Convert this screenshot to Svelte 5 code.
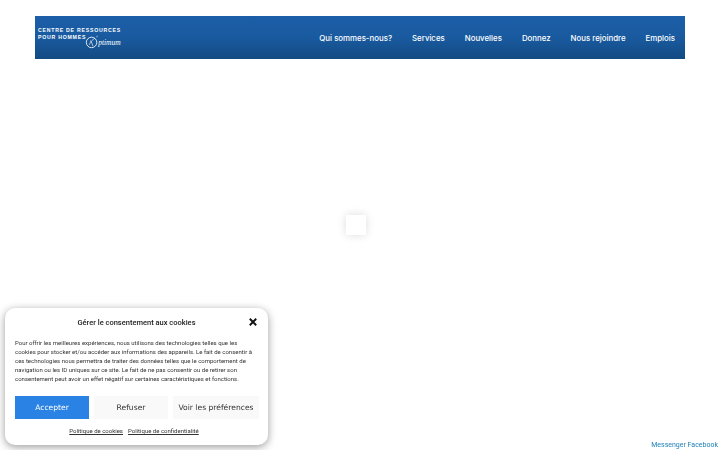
<script lang="ts">
  const navItems = ['Qui sommes-nous?', 'Services', 'Nouvelles', 'Donnez', 'Nous rejoindre', 'Emplois'];
  const consentLines = [
    'Pour offrir les meilleures expériences, nous utilisons des technologies telles que les',
    'cookies pour stocker et/ou accéder aux informations des appareils. Le fait de consentir à',
    'ces technologies nous permettra de traiter des données telles que le comportement de',
    'navigation ou les ID uniques sur ce site. Le fait de ne pas consentir ou de retirer son',
    'consentement peut avoir un effet négatif sur certaines caractéristiques et fonctions.'
  ];
</script>

<div class="page">
  <header class="site-header">
    <a class="logo" href="#top">
      <div class="logo-line">CENTRE DE RESSOURCES</div>
      <div class="logo-row">
        <span class="logo-line">POUR HOMMES</span>
        <svg class="logo-o" viewBox="0 0 16 16" width="15" height="15" aria-hidden="true">
          <circle cx="7" cy="9" r="5.6" fill="none" stroke="#fff" stroke-width="0.9" />
          <path d="M4.5 11.5C6 8 8 6 10.5 4.5M6 7c1 2 2 4 2.5 6M12 3.2l1.6-1" fill="none" stroke="#fff" stroke-width="0.7" />
        </svg>
        <span class="logo-script">ptimum</span>
      </div>
    </a>
    <nav class="main-nav">
      {#each navItems as item}
        <a href="#top">{item}</a>
      {/each}
    </nav>
  </header>
</div>

<div class="loader"></div>

<section class="cookie-banner">
  <div class="cookie-head">
    <div class="cookie-title">Gérer le consentement aux cookies</div>
    <svg class="cookie-close" viewBox="0 0 10 10" width="8" height="8" aria-hidden="true">
      <path d="M1 1l8 8M9 1l-8 8" stroke="#111" stroke-width="2.4" fill="none" />
    </svg>
  </div>
  <div class="cookie-text">
    {#each consentLines as line}
      <div>{line}</div>
    {/each}
  </div>
  <div class="cookie-buttons">
    <button class="accept">Accepter</button>
    <button>Refuser</button>
    <button>Voir les préférences</button>
  </div>
  <div class="cookie-links">
    <a href="#top">Politique de cookies</a>
    <a href="#top">Politique de confidentialité</a>
  </div>
</section>

<a class="messenger" href="#top">Messenger Facebook</a>

<style>
  :global(body) {
    margin: 0;
    background: #fff;
    font-family: Roboto, "Liberation Sans", sans-serif;
  }
  .page {
    padding: 16px 35px 0;
    height: 450px;
    box-sizing: border-box;
    overflow: hidden;
  }
  .site-header {
    height: 43px;
    display: flex;
    align-items: center;
    justify-content: space-between;
    padding: 0 10px 0 3px;
    background: linear-gradient(180deg, #1c5ea8 0%, #195a9f 50%, #134a82 100%);
  }
  .logo {
    display: flex;
    flex-direction: column;
    text-decoration: none;
    color: #fff;
    margin-top: 1px;
  }
  .logo-line {
    font: 700 5.2px/7px "Liberation Sans", sans-serif;
    letter-spacing: 0.76px;
    white-space: nowrap;
  }
  .logo-row {
    display: flex;
    align-items: flex-start;
    height: 16px;
  }
  .logo-o {
    margin: 0 0 0 -1px;
  }
  .logo-script {
    font: italic 400 7.5px/16px "Liberation Serif", serif;
    margin: 1px 0 0 -2px;
  }
  .main-nav {
    display: flex;
    gap: 20px;
    margin-top: 1px;
  }
  .main-nav a {
    color: #fff;
    text-decoration: none;
    font: 500 7.85px/14px Inter, sans-serif;
    white-space: nowrap;
  }
  .loader {
    position: fixed;
    left: 346px;
    top: 215px;
    width: 20px;
    height: 20px;
    background: #fff;
    box-shadow: 0 0 10px rgba(0, 0, 0, 0.14);
  }
  .cookie-banner {
    position: fixed;
    left: 5px;
    top: 308px;
    width: 263px;
    height: 137px;
    box-sizing: border-box;
    padding: 0 10px;
    background: #fff;
    border-radius: 10px;
    box-shadow: 0 2px 8px rgba(0, 0, 0, 0.4);
    display: flex;
    flex-direction: column;
  }
  .cookie-head {
    position: relative;
    height: 28px;
    display: flex;
    align-items: center;
    justify-content: center;
    flex: none;
  }
  .cookie-title {
    font-weight: 500;
    font-size: 7.5px;
    color: #222;
  }
  .cookie-close {
    position: absolute;
    right: 1px;
    top: 10px;
  }
  .cookie-text {
    margin-top: 2px;
    font-size: 6px;
    line-height: 9px;
    color: #333;
    white-space: nowrap;
  }
  .cookie-buttons {
    display: grid;
    grid-template-columns: 74px 74px 86px;
    gap: 5px;
    margin-top: 13px;
  }
  .cookie-buttons button {
    height: 23px;
    border: 0;
    padding: 0;
    background: #f9f9f9;
    color: #333;
    font: 400 7.6px/23px "DejaVu Sans", sans-serif;
    white-space: nowrap;
  }
  .cookie-buttons .accept {
    background: #2a82e4;
    color: #fff;
  }
  .cookie-links {
    display: flex;
    justify-content: center;
    gap: 5px;
    margin: 7px 5px 0 0;
  }
  .cookie-links a {
    font-size: 6px;
    line-height: 9px;
    color: #333;
  }
  .messenger {
    position: fixed;
    right: 2px;
    bottom: 0;
    font-size: 7px;
    line-height: 10px;
    color: #1d7fb8;
    text-decoration: none;
  }
</style>
